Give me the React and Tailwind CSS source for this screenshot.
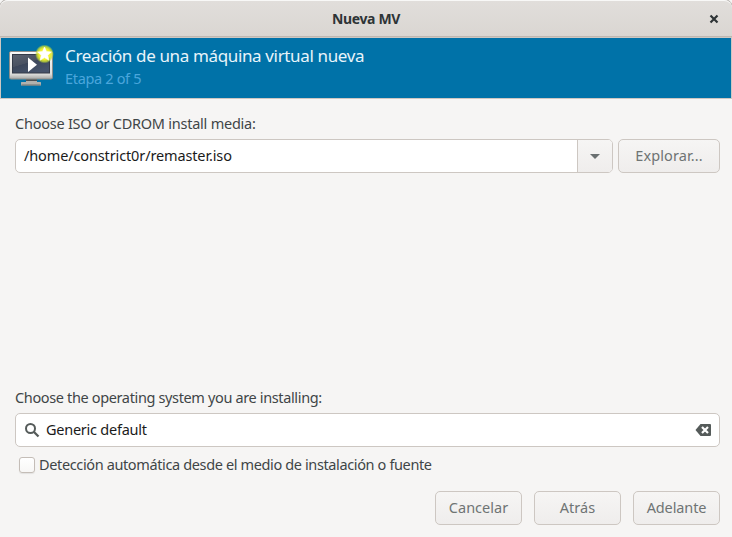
import React from "react";

function Button({ children, className = "" }) {
  return (
    <button
      className={`flex h-[34px] items-center justify-center rounded-[5px] border border-[#cdc7c2] bg-gradient-to-b from-[#f6f5f4] to-[#efedec] pb-px text-[14.5px] whitespace-nowrap text-[#6f7474] ${className}`}
    >
      {children}
    </button>
  );
}

function MachineIcon() {
  return (
    <svg width="48" height="48" viewBox="0 0 48 48" className="shrink-0">
      <defs>
        <linearGradient id="frame" x1="0" y1="0" x2="0" y2="1">
          <stop offset="0" stopColor="#fafafa" />
          <stop offset="0.82" stopColor="#dededc" />
          <stop offset="1" stopColor="#a6a7a5" />
        </linearGradient>
        <linearGradient id="screen" x1="0" y1="0" x2="0.6" y2="1">
          <stop offset="0" stopColor="#5b6270" />
          <stop offset="0.5" stopColor="#4a5262" />
          <stop offset="0.52" stopColor="#3d475b" />
          <stop offset="1" stopColor="#46536b" />
        </linearGradient>
        <radialGradient id="glow">
          <stop offset="0" stopColor="#fbfb60" />
          <stop offset="0.6" stopColor="#eef02a" />
          <stop offset="0.82" stopColor="#c8de34" stopOpacity="0.75" />
          <stop offset="1" stopColor="#a0c840" stopOpacity="0" />
        </radialGradient>
      </defs>
      <path d="M19 37h11v3h3.500q.5 0 .5 1v2.500H14V41q0-1 .5-1H19z" fill="#b0b1ae" />
      <path d="M19 37h11v2H19z" fill="#4d5053" />
      <path d="M14.500 42.500h19v1h-19z" fill="#70736f" />
      <rect x="2.500" y="9.500" width="43" height="27.500" rx="1.500" fill="url(#frame)" stroke="#8d8f8c" />
      <rect x="5.500" y="12.500" width="37" height="18.500" fill="url(#screen)" stroke="#343b49" />
      <path d="M21 15.500v14.500l9-7.250z" fill="#fff" />
      <circle cx="37.500" cy="12" r="9.500" fill="url(#glow)" />
      <path
        d="m37.500 5 2 4.600 4.900.4-3.700 3.300 1.200 4.900-4.400-2.600-4.400 2.600 1.200-4.900-3.700-3.300 4.900-.4z"
        fill="#fff"
        stroke="#fff"
        strokeWidth="0.600"
        strokeLinejoin="round"
      />
    </svg>
  );
}

export default function App() {
  return (
    <div className="h-[537px] w-[732px] overflow-hidden bg-[#f6f5f4] font-['Noto_Sans','Open_Sans',sans-serif] text-[14.5px] text-[#3f4547]">
      <div className="flex h-full flex-col overflow-hidden rounded-t-[8px] border-t border-[#f8f8f7] ring-1 ring-[#b6b2ae]">
        <header className="grid h-[36px] shrink-0 grid-cols-[34px_1fr_34px] items-center border-b border-[#bfb8b1] bg-gradient-to-b from-[#e1dedb] to-[#dad6d2]">
          <span />
          <h1 className="text-center text-[14px] font-bold tracking-[-0.35px] text-[#2e3436]">Nueva MV</h1>
          <svg width="10" height="10" viewBox="0 0 10 10" className="ml-[11px]">
            <path d="m1.500 1.500 7 7m0-7-7 7" stroke="#2e3436" strokeWidth="2.200" />
          </svg>
        </header>

        <section className="flex h-[62px] shrink-0 border border-[#cdc7c2] bg-[#0072a8] pt-[4px] pl-[6px]">
          <MachineIcon />
          <div className="pl-[10px]">
            <h2 className="h-[25px] text-[17px] leading-[27px] tracking-[-0.36px] whitespace-nowrap text-[#e8f4fa]">Creación de una máquina virtual nueva</h2>
            <p className="text-[14.5px] leading-[22px] tracking-[-0.33px] text-[#4ba6dc]">Etapa 2 of 5</p>
          </div>
        </section>

        <main className="flex flex-1 flex-col pr-[12px] pl-[15px]">
          <label className="mt-[13px] h-[27px] leading-[22px] tracking-[-0.24px]">Choose ISO or CDROM install media:</label>
          <div className="flex gap-[5px]">
            <div className="flex h-[34px] w-[598px] overflow-hidden rounded-[5px] border border-[#cdc7c2] bg-white">
              <div className="flex flex-1 items-center pb-px pl-[8px] tracking-[-0.13px] text-[#1b1b1b]">/home/constrict0r/remaster.iso</div>
              <div className="flex w-[35px] items-center justify-center border-l border-[#cdc7c2] bg-gradient-to-b from-[#f6f5f4] to-[#efedec]">
                <svg width="10" height="5" viewBox="0 0 10 5"><path d="M0 0h10L5 5z" fill="#6a7071" /></svg>
              </div>
            </div>
            <Button className="w-[102px] tracking-[0.1px]">Explorar...</Button>
          </div>

          <label className="mt-auto h-[27px] leading-[22px] tracking-[-0.36px]">Choose the operating system you are installing:</label>
          <div className="flex h-[34px] shrink-0 items-center rounded-[5px] border border-[#cdc7c2] bg-white pr-[8px] pl-[8px]">
            <svg width="16" height="16" viewBox="0 0 16 16">
              <circle cx="6.500" cy="6.500" r="4.500" fill="none" stroke="#555b5a" strokeWidth="2" />
              <path d="m10 10 4.500 4.500" stroke="#555b5a" strokeWidth="2.300" />
            </svg>
            <div className="flex-1 pb-px pl-[6px] tracking-[-0.25px] text-[#1b1b1b]">Generic default</div>
            <svg width="16" height="16" viewBox="0 0 16 16">
              <path d="M5.500 2H15q1 0 1 1v10q0 1-1 1H5.500L.5 8z" fill="#555b5a" />
              <path d="m7 5 6 6m0-6-6 6" stroke="#fff" strokeWidth="2.200" />
            </svg>
          </div>
          <div className="mt-[9px] flex h-[18px] items-center gap-[4px] pl-[4px]">
            <i className="size-[16px] rounded-[3px] border border-[#c4bdb7] bg-gradient-to-b from-white to-[#f8f7f6] shadow-[0_1px_1px_rgba(0,0,0,0.08)]" />
            <span className="tracking-[-0.37px]">Detección automática desde el medio de instalación o fuente</span>
          </div>
          <footer className="mt-[17px] mb-[12px] flex justify-end gap-[12px]">
            <Button className="w-[87px]">Cancelar</Button>
            <Button className="w-[87px]">Atrás</Button>
            <Button className="w-[87px] tracking-[-0.12px]">Adelante</Button>
          </footer>
        </main>
      </div>
    </div>
  );
}
